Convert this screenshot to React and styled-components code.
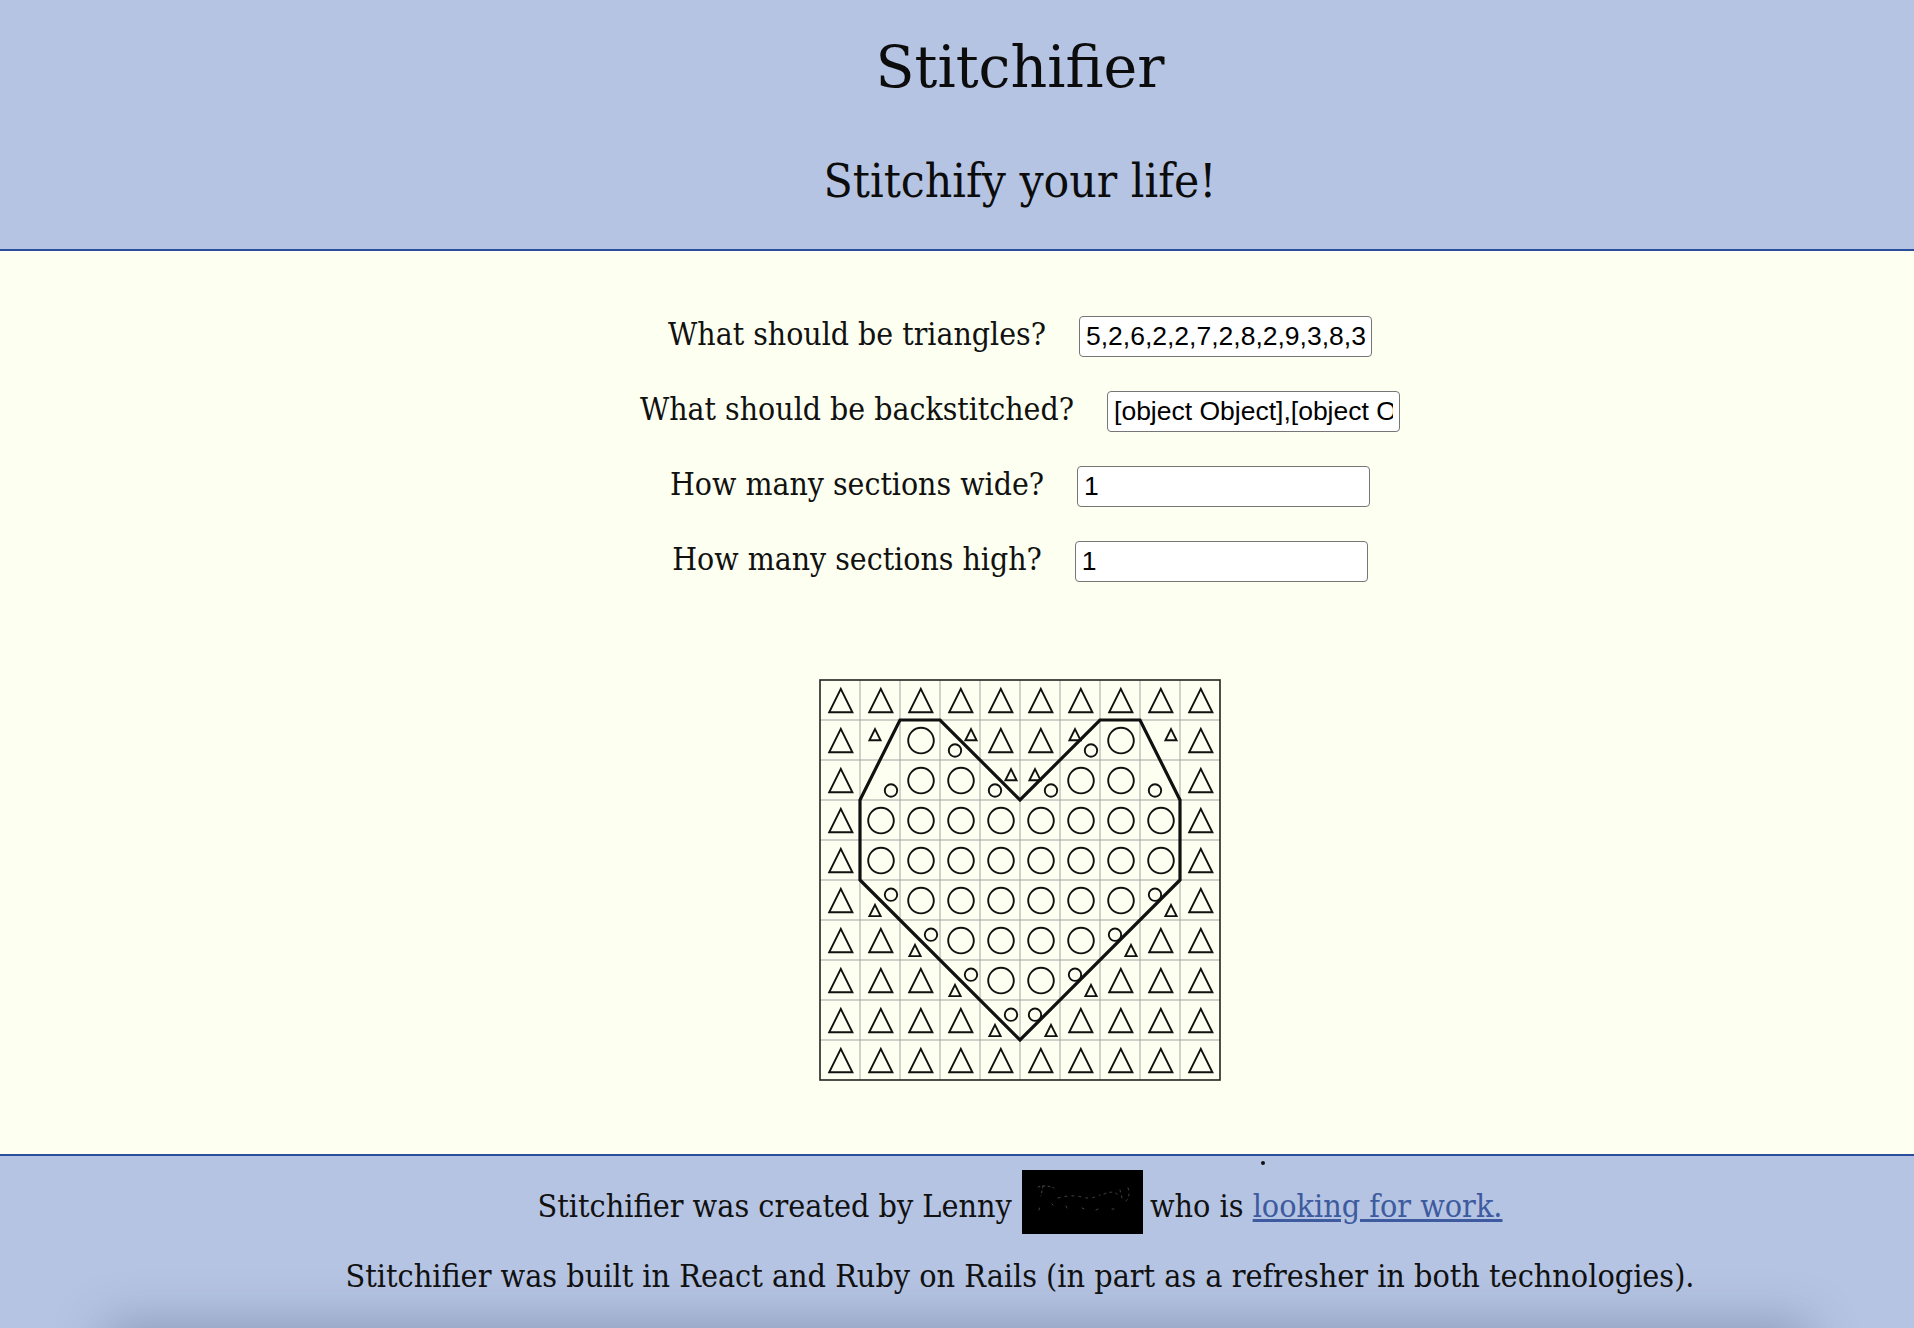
import React from "react";
import styled, { createGlobalStyle } from "styled-components";

// the page content sits 126px right of the window centre (the original overflowed)
const SHIFT = 126;
const CELL = 40;

const GlobalStyle = createGlobalStyle`
  html, body {
    margin: 0;
    padding: 0;
    overflow: hidden;
  }
  body {
    background: #fdfff0;
    color: #111;
    font-family: "DejaVu Serif Condensed", "DejaVu Serif", serif;
  }
`;

const Header = styled.header`
  background: #b5c4e2;
  border-bottom: 2px solid #2b4e9c;
  padding: 34px 0 40px ${SHIFT}px;
  text-align: center;
`;

const Title = styled.h1`
  margin: 0;
  font-family: "DejaVu Serif", serif;
  font-size: 57px;
  line-height: 66px;
  font-weight: normal;
  color: #0c0c0c;
`;

const Subtitle = styled.h2`
  margin: 52px 0 0;
  font-size: 47.5px;
  line-height: 57px;
  font-weight: normal;
  color: #0c0c0c;
`;

const Main = styled.main`
  padding: 65px 0 73px ${SHIFT}px;
  display: flex;
  flex-direction: column;
  align-items: center;
`;

const Form = styled.form`
  display: flex;
  flex-direction: column;
  align-items: center;
  gap: 34px;
`;

const Row = styled.div`
  display: flex;
  align-items: baseline;
  gap: 33px;
`;

const Label = styled.label`
  font-size: 31.7px;
  line-height: 32px;
  white-space: nowrap;
`;

const Input = styled.input`
  box-sizing: border-box;
  width: 293px;
  height: 41px;
  padding: 0 6px;
  border: 1px solid #767676;
  border-radius: 4px;
  background: #fff;
  color: #000;
  font-family: "Liberation Sans", Arial, sans-serif;
  font-size: 26.5px;
`;

const Chart = styled.svg`
  display: block;
  margin-top: 97px;
`;

const Footer = styled.footer`
  position: relative;
  overflow: hidden;
  background: #b5c4e2;
  border-top: 2px solid #2b4e9c;
  padding: 14px 0 34px ${SHIFT}px;
  text-align: center;

  &::after {
    content: "";
    position: absolute;
    left: 110px;
    right: 110px;
    top: 100%;
    height: 40px;
    box-shadow: 0 0 50px 4px rgba(70, 80, 120, 0.4);
  }
`;

const FooterLine = styled.p`
  margin: ${(p) => (p.$second ? "23px" : "0")} 0 0;
  font-size: 32px;
  line-height: 38px;
`;

const WorkLink = styled.a`
  color: #3d5b9e;
  text-decoration: underline;
`;

const Signature = styled.svg`
  display: inline-block;
  vertical-align: -17px;
  margin: 0 7px 0 10px;
`;

const Speck = styled.span`
  position: absolute;
  left: 1261px;
  top: 5px;
  width: 4px;
  height: 4px;
  border-radius: 50%;
  background: #111;
`;

const T = Array(10).fill("T");
const INNER = ["T", "O", "O", "O", "O", "O", "O", "O", "O", "T"];
const PATTERN = [
  T,
  ["T", "tTL", "O", "cBL+tTR", "T", "T", "tTL+cBR", "O", "tTR", "T"],
  ["T", "cBR", "O", "O", "cBL+tTR", "tTL+cBR", "O", "O", "cBL", "T"],
  INNER,
  INNER,
  ["T", "cTR+tBL", "O", "O", "O", "O", "O", "O", "cTL+tBR", "T"],
  ["T", "T", "cTR+tBL", "O", "O", "O", "O", "cTL+tBR", "T", "T"],
  ["T", "T", "T", "cTR+tBL", "O", "O", "cTL+tBR", "T", "T", "T"],
  ["T", "T", "T", "T", "cTR+tBL", "cTL+tBR", "T", "T", "T", "T"],
  T,
];

const BACKSTITCH = [
  [1, 3], [2, 1], [3, 1], [5, 3], [7, 1], [8, 1], [9, 3], [9, 5], [5, 9], [1, 5],
];

function triangle(cx, cy, hw, up, down) {
  return `${cx - hw},${cy + down} ${cx + hw},${cy + down} ${cx},${cy - up}`;
}

function Stitch({ code, x, y }) {
  if (code === "T") {
    return <polygon points={triangle(x + 20.8, y + 20.5, 11.6, 11.6, 11.8)} />;
  }
  if (code === "O") {
    return <circle cx={x + 21} cy={y + 20.6} r={12.8} />;
  }
  const cx = x + (code[2] === "L" ? 15 : 31);
  const cy = y + (code[1] === "T" ? 14.7 : 30.5);
  if (code[0] === "t") {
    return <polygon points={triangle(cx, cy, 5.6, 5.6, 5.6)} />;
  }
  return <circle cx={cx} cy={cy} r={6.2} />;
}

function PatternChart() {
  const size = CELL * 10 + 2;
  const lines = [];
  for (let i = 1; i < 10; i++) {
    const p = 1 + i * CELL;
    lines.push(<line key={"v" + i} x1={p} y1={1} x2={p} y2={size - 1} />);
    lines.push(<line key={"h" + i} x1={1} y1={p} x2={size - 1} y2={p} />);
  }
  return (
    <Chart width={size} height={size} viewBox={`0 0 ${size} ${size}`}>
      <g stroke="#a3a3a0" strokeWidth="1">{lines}</g>
      <rect x="1" y="1" width={CELL * 10} height={CELL * 10} fill="none" stroke="#222" strokeWidth="1.6" />
      <g fill="none" stroke="#111" strokeWidth="1.9">
        {PATTERN.map((row, r) =>
          row.map((cell, c) =>
            cell.split("+").map((code, k) => (
              <Stitch key={`${r}-${c}-${k}`} code={code} x={1 + c * CELL} y={1 + r * CELL} />
            ))
          )
        )}
      </g>
      <polygon
        points={BACKSTITCH.map(([gx, gy]) => `${1 + gx * CELL},${1 + gy * CELL}`).join(" ")}
        fill="none"
        stroke="#111"
        strokeWidth="3.2"
      />
    </Chart>
  );
}

function SignatureImage() {
  return (
    <Signature width="121" height="64" viewBox="0 0 121 64" aria-label="signature">
      <rect width="121" height="64" fill="#000" />
      <g fill="none" stroke="#9a9a9a" strokeWidth="0.8" strokeLinecap="round" opacity="0.55">
        <path d="M16 17 c6 -2 12 -1 16 1 M21 16 l-2 10 M17 40 l1 -4" strokeDasharray="2 3" />
        <path d="M36 28 c8 -2 16 -3 24 -1 c6 2 12 1 18 -2" strokeDasharray="2 5" />
        <path d="M82 24 c6 -3 12 -2 14 1 M98 20 l2 8 M106 18 c2 5 1 10 -2 13" strokeDasharray="2 4" />
        <path d="M60 38 l2 1 M74 40 l2 -1 M90 39 l2 0 M44 36 l1 2 M30 34 l1 1" />
      </g>
    </Signature>
  );
}

export default function App() {
  return (
    <>
      <GlobalStyle />
      <Header>
        <Title>Stitchifier</Title>
        <Subtitle>Stitchify your life!</Subtitle>
      </Header>

      <Main>
        <Form onSubmit={(e) => e.preventDefault()}>
          <Row>
            <Label htmlFor="triangles">What should be triangles?</Label>
            <Input
              id="triangles"
              defaultValue="5,2,6,2,2,7,2,8,2,9,3,8,3,9,4,9,5,9,6,9,7,9,8,9,9,9"
            />
          </Row>
          <Row>
            <Label htmlFor="backstitch">What should be backstitched?</Label>
            <Input
              id="backstitch"
              defaultValue="[object Object],[object Object],[object Object],[object Object]"
            />
          </Row>
          <Row>
            <Label htmlFor="wide">How many sections wide?</Label>
            <Input id="wide" defaultValue="1" />
          </Row>
          <Row>
            <Label htmlFor="high">How many sections high?</Label>
            <Input id="high" defaultValue="1" />
          </Row>
        </Form>

        <PatternChart />
      </Main>

      <Footer>
        <Speck />
        <FooterLine>
          Stitchifier was created by Lenny
          <SignatureImage />
          who is <WorkLink href="#work">looking for work.</WorkLink>
        </FooterLine>
        <FooterLine $second>
          Stitchifier was built in React and Ruby on Rails (in part as a refresher in both technologies).
        </FooterLine>
      </Footer>
    </>
  );
}
